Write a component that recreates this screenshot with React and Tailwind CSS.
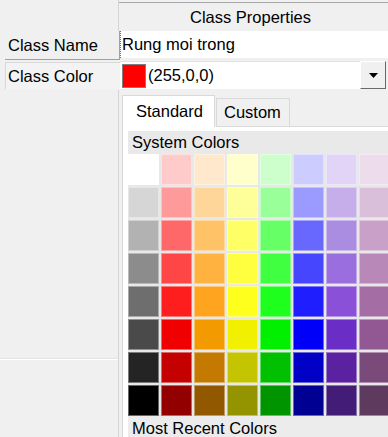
import React from 'react'

const palette = [
    ['#ffffff', '#ffcaca', '#ffe8cc', '#ffffcc', '#ccffcc', '#ccccff', '#e2d4f6', '#ecdcec'],
    ['#d6d6d6', '#ff9a9a', '#ffd699', '#ffff99', '#99ff99', '#9a9aff', '#c6aeea', '#dabfda'],
    ['#b2b2b2', '#ff6868', '#ffc266', '#ffff66', '#66ff66', '#6868ff', '#aa8ce0', '#c8a0c8'],
    ['#8c8c8c', '#ff4646', '#ffb240', '#ffff40', '#40ff40', '#4646ff', '#9a6ede', '#b888b8'],
    ['#6e6e6e', '#ff1e1e', '#ffa41e', '#ffff1e', '#1eff1e', '#1e1eff', '#8a50d8', '#a46ea4'],
    ['#4a4a4a', '#f00000', '#f29a00', '#f0f000', '#00f000', '#0000f8', '#6a2ec6', '#925894'],
    ['#242424', '#c40000', '#c47a00', '#c4c400', '#00c000', '#0000c6', '#5a22a0', '#7a4a7a'],
    ['#000000', '#920000', '#925800', '#949400', '#009400', '#000092', '#421c76', '#5e3a5e'],
]

function ColorGrid() {
    return (
        <div className="grid grid-cols-[repeat(8,31px)] gap-[2px] w-max">
            {palette.flat().map((c, i) => (
                <div
                    key={i}
                    className="h-[31px] w-[31px] border border-white/40"
                    style={{ backgroundColor: c }}
                />
            ))}
        </div>
    )
}

function App() {
    return (
        <div className="w-[388px] h-[437px] overflow-hidden bg-[#f0f0f0] text-black text-[16.5px] leading-none font-['Liberation_Sans',Arial,sans-serif] flex flex-col">
            {/* Header row */}
            <div className="flex h-[31px] shrink-0">
                <div className="w-[119px] border-r border-[#d4d4d4]" />
                <div className="flex-1 mt-[2px] border-t border-[#a8a8a8] flex items-center justify-center pr-[6px]">
                    Class Properties
                </div>
            </div>

            {/* Class Name row */}
            <div className="flex h-[30px] shrink-0">
                <div className="w-[120px] pl-[5px]">
                    <div className="h-[29px] border-b border-r border-[#a0a0a0] flex items-center pl-[3px]">
                        Class Name
                    </div>
                </div>
                <div className="flex-1 h-[27px] bg-white border-l border-dotted border-[#707070] flex items-center pl-[1px]">
                    Rung moi trong
                </div>
            </div>

            {/* Class Color row */}
            <div className="flex h-[29px] shrink-0">
                <div className="w-[120px] pl-[5px] pt-[1px]">
                    <div className="h-[27px] border-t border-l border-[#d8d8d8] bg-[#f3f3f3] flex items-center pl-[2px]">
                        Class Color
                    </div>
                </div>
                <div className="flex-1 flex pr-[2px]">
                    <div className="flex-1 h-[28px] bg-white border-t border-[#e2e2e2] flex items-center pl-[2px]">
                        <div className="w-[24px] h-[24px] bg-[#ff0000] border border-[#808080]" />
                        <span className="ml-[2px]">(255,0,0)</span>
                    </div>
                    <div className="w-[26px] h-[28px] bg-[#f0f0f0] border-t border-l border-white border-r border-b border-r-[#696969] border-b-[#696969] flex items-center justify-center">
                        <svg width="9" height="5" viewBox="0 0 9 5">
                            <path d="M0 0h9L4.5 5z" fill="#000" />
                        </svg>
                    </div>
                </div>
            </div>

            {/* Lower area */}
            <div className="flex flex-1 min-h-0">
                <div className="w-[119px] border-r border-[#d4d4d4] flex flex-col">
                    <div className="h-[268px]" />
                    <div className="h-[2px] bg-white border-t border-[#e4e4e4]" />
                </div>

                {/* Tab control */}
                <div className="flex-1 pl-[3px] pt-[5px] flex flex-col min-w-0">
                    <div className="flex items-end h-[32px] shrink-0">
                        <div className="w-[93px] h-[32px] bg-white border-t border-l border-r border-[#d9d9d9] flex items-center pl-[13px] pb-[1px]">
                            Standard
                        </div>
                        <div className="w-[74px] h-[29px] ml-[1px] bg-[#f0f0f0] border border-[#d9d9d9] flex items-center pl-[7px]">
                            Custom
                        </div>
                        <div className="flex-1 border-b border-[#d9d9d9]" />
                    </div>
                    <div className="flex-1 bg-white border-l border-[#d9d9d9] pl-[5px] pt-[4px] flex flex-col min-h-0">
                        <div className="h-[23px] bg-[#e9e9e9] flex items-center pl-[4px] shrink-0">
                            System Colors
                        </div>
                        <div className="bg-[#e8e8e8]">
                            <ColorGrid />
                        </div>
                        <div className="h-[22px] bg-[#ececec] flex items-center pl-[4px] pt-[2px] shrink-0">
                            Most Recent Colors
                        </div>
                    </div>
                </div>
            </div>
        </div>
    )
}

export default App
